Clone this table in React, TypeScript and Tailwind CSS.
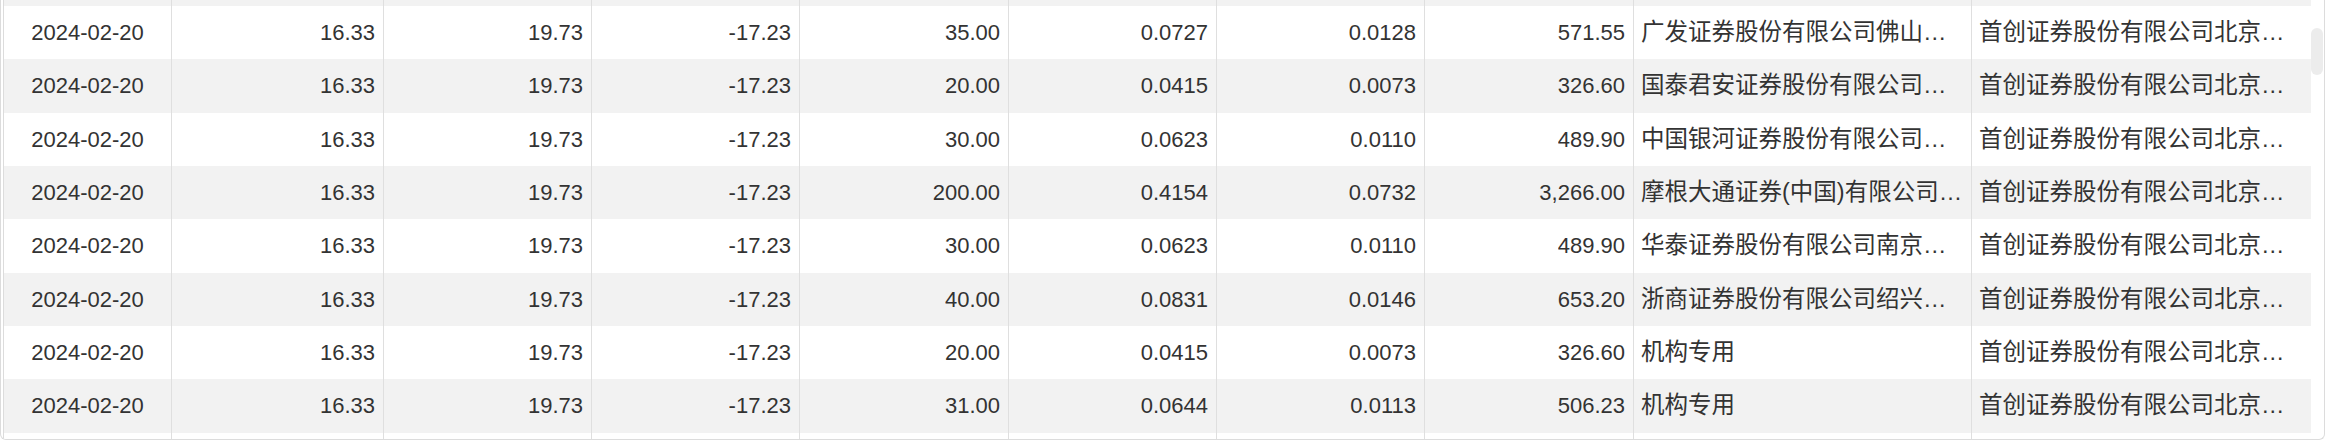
const rows = [
  ['35.00', '0.0727', '0.0128', '571.55', '广发证券股份有限公司佛山季华六路证券营业部'],
  ['20.00', '0.0415', '0.0073', '326.60', '国泰君安证券股份有限公司上海江苏路证券营业部'],
  ['30.00', '0.0623', '0.0110', '489.90', '中国银河证券股份有限公司北京中关村大街证券营业部'],
  ['200.00', '0.4154', '0.0732', '3,266.00', '摩根大通证券(中国)有限公司上海银城中路证券营业部'],
  ['30.00', '0.0623', '0.0110', '489.90', '华泰证券股份有限公司南京江东中路证券营业部'],
  ['40.00', '0.0831', '0.0146', '653.20', '浙商证券股份有限公司绍兴解放北路证券营业部'],
  ['20.00', '0.0415', '0.0073', '326.60', '机构专用'],
  ['31.00', '0.0644', '0.0113', '506.23', '机构专用'],
]

const buyer = '首创证券股份有限公司北京广渠门内大街证券营业部'

// cell widths include the 1px right border
const widths = [
  'w-[168px]',
  'w-[212px]',
  'w-[208px]',
  'w-[208px]',
  'w-[209px]',
  'w-[208px]',
  'w-[208px]',
  'w-[209px]',
  'w-[338px]',
  'w-[339px]',
]

function Cell({
  width,
  align,
  cjk,
  last,
  children,
}: {
  width: string
  align: 'center' | 'right' | 'left'
  cjk?: boolean
  last?: boolean
  children?: React.ReactNode
}) {
  return (
    <div
      className={`${width} shrink-0 h-full flex items-center overflow-hidden ${
        cjk ? 'px-[7px]' : 'px-2'
      } ${last ? '' : 'border-r border-[#dfdfdf]'} ${
        align === 'center'
          ? 'justify-center'
          : align === 'right'
            ? 'justify-end'
            : 'justify-start'
      }`}
    >
      <span
        className={`block min-w-0 truncate whitespace-nowrap ${
          cjk ? 'text-[23.5px]' : 'text-[22px]'
        }`}
      >
        {children}
      </span>
    </div>
  )
}

function Row({ data, striped }: { data: string[]; striped: boolean }) {
  const cells = ['2024-02-20', '16.33', '19.73', '-17.23', ...data, buyer]
  return (
    <div
      className={`flex h-[53.33px] shrink-0 ${striped ? 'bg-[#f2f2f2]' : 'bg-white'}`}
    >
      {cells.map((c, i) => (
        <Cell
          key={i}
          width={widths[i]}
          align={i === 0 ? 'center' : i >= 8 ? 'left' : 'right'}
          cjk={i >= 8}
          last={i === 9}
        >
          {c}
        </Cell>
      ))}
    </div>
  )
}

function Spacer({ height, striped }: { height: string; striped?: boolean }) {
  return (
    <div className={`flex shrink-0 ${height} ${striped ? 'bg-[#f2f2f2]' : 'bg-white'}`}>
      {widths.map((w, i) => (
        <div
          key={i}
          className={`${w} shrink-0 h-full ${i === 9 ? '' : 'border-r border-[#dfdfdf]'}`}
        />
      ))}
    </div>
  )
}

export default function App() {
  return (
    <div
      className="w-[2325px] h-[441px] bg-white text-[#333333]"
      style={{ fontFamily: '"Liberation Sans", "Noto Sans CJK SC", sans-serif' }}
    >
      <div className="flex h-[440px] border-x border-b border-[#dcdcdc] rounded-b-[6px] overflow-hidden">
        <div className="w-[2px] shrink-0" />
        <div className="flex flex-col flex-1 border-l border-[#dcdcdc] overflow-hidden">
          <Spacer height="h-[6px]" striped />
          {rows.map((r, i) => (
            <Row key={i} data={r} striped={i % 2 === 1} />
          ))}
          <Spacer height="flex-1" />
        </div>
        <div className="w-[13px] shrink-0 flex flex-col">
          <div className="mt-[28px] h-[47px] w-[12px] rounded-[6px] bg-[#ececec]" />
        </div>
      </div>
    </div>
  )
}
